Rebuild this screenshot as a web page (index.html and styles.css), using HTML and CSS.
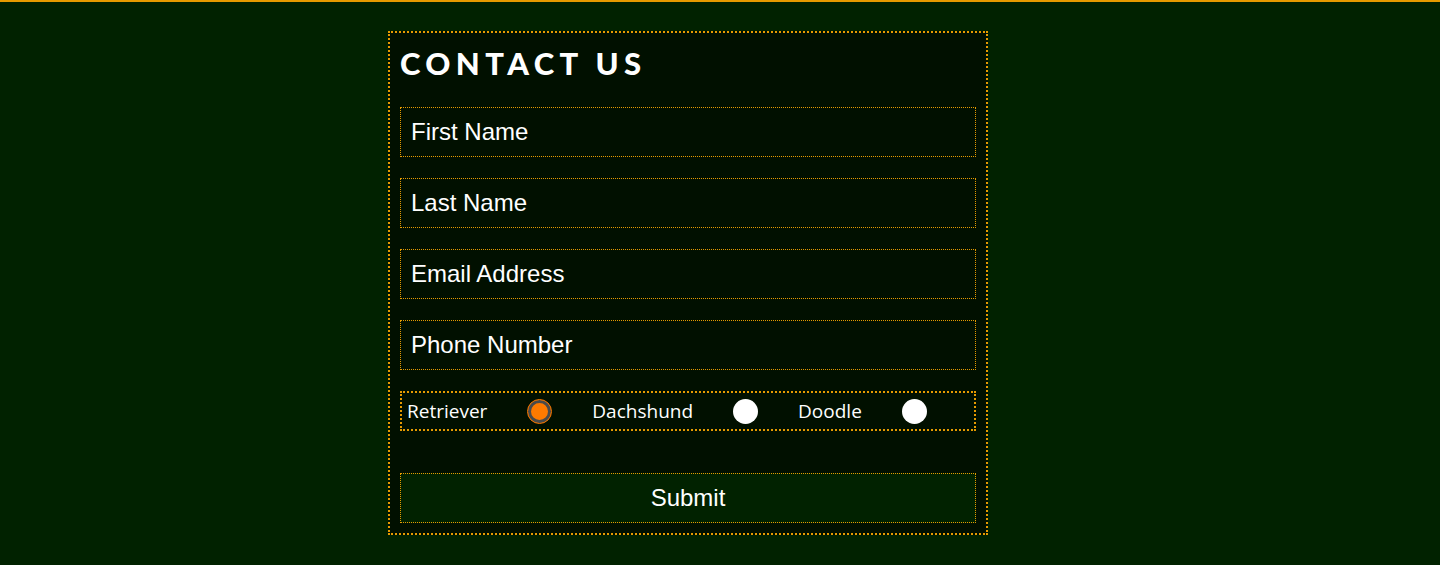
FILE: index.html
```html
<!DOCTYPE html>
<html lang="en">
<head>
<meta charset="utf-8">
<title>Contact Us</title>
<link rel="stylesheet" href="styles.css">
</head>
<body>
<main class="page">
  <form class="contact-form">
    <h1 class="title">CONTACT US</h1>
    <input class="field" type="text" placeholder="First Name">
    <input class="field" type="text" placeholder="Last Name">
    <input class="field" type="email" placeholder="Email Address">
    <input class="field" type="tel" placeholder="Phone Number">
    <div class="dogs" role="radiogroup">
      <label class="dog-label" for="r1">Retriever</label>
      <input class="radio" id="r1" type="radio" name="dog" checked>
      <label class="dog-label" for="r2">Dachshund</label>
      <input class="radio" id="r2" type="radio" name="dog">
      <label class="dog-label" for="r3">Doodle</label>
      <input class="radio" id="r3" type="radio" name="dog">
    </div>
    <button class="submit" type="button">Submit</button>
  </form>
</main>
</body>
</html>
```
FILE: styles.css
```css
html, body {
  margin: 0;
  padding: 0;
}
body {
  background: #012200;
  border-top: 2px solid #e69a00;
  min-height: 563px;
  font-family: "Liberation Sans", Arial, sans-serif;
}
.page {
  display: flex;
  justify-content: center;
  padding-top: 29px;
}
.contact-form {
  width: 576px;
  padding: 10px;
  margin-left: -64px;
  border: 2px dotted #e69a00;
  background: #011000;
  display: flex;
  flex-direction: column;
}
.title {
  margin: 0 0 24px 0;
  font-family: Lato, "Open Sans", sans-serif;
  font-weight: 900;
  font-size: 31px;
  line-height: 40px;
  letter-spacing: 5.4px;
  color: #ffffff;
}
.field {
  box-sizing: border-box;
  height: 50px;
  margin: 0 0 21px 0;
  padding: 0 10px;
  border: 1px dotted #e69a00;
  background: #011000;
  color: #ffffff;
  font-family: "Liberation Sans", Arial, sans-serif;
  font-size: 24px;
  outline: none;
}
.field::placeholder {
  color: #ffffff;
  opacity: 1;
}
.dogs {
  box-sizing: border-box;
  height: 40px;
  padding: 0 5px;
  border: 2px dotted #e69a00;
  display: flex;
  align-items: center;
  gap: 40px;
}
.dog-label {
  font-family: "Open Sans", Lato, sans-serif;
  font-size: 19px;
  line-height: 24px;
  color: #ffffff;
}
.radio {
  appearance: none;
  width: 25px;
  height: 25px;
  margin: 0;
  border-radius: 50%;
  background: #ffffff;
  flex: none;
}
.radio:checked {
  background: #ff7a00;
  border: 1px solid #ff7a00;
  box-shadow: inset 0 0 0 3px #4a4a4a;
  box-sizing: border-box;
  background-clip: padding-box;
}
.submit {
  margin-top: 42px;
  height: 50px;
  border: 1px dotted #e69a00;
  background: #012200;
  color: #ffffff;
  font-family: "Liberation Sans", Arial, sans-serif;
  font-size: 24px;
}
```
